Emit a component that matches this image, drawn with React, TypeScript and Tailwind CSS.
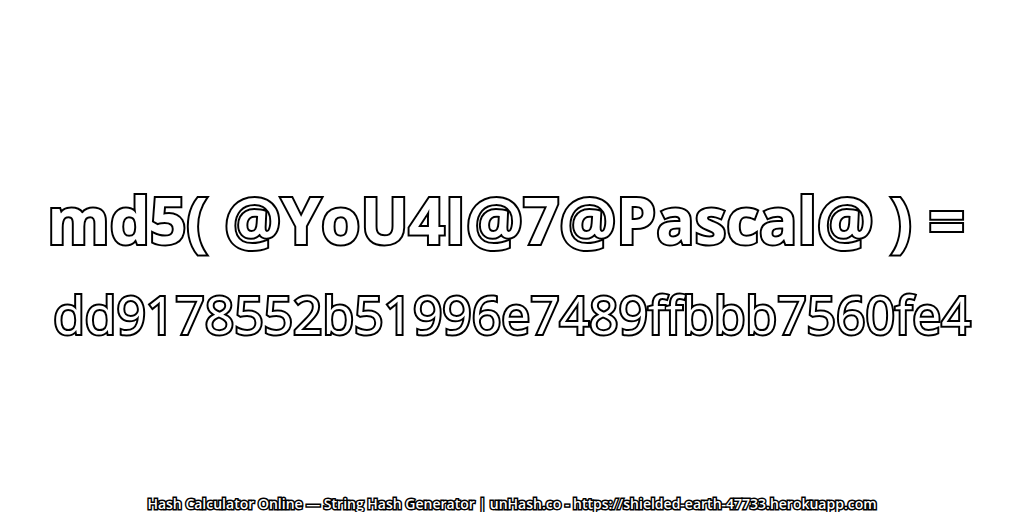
export default function App() {
  return (
    <div className="relative flex h-[512px] w-[1024px] flex-col items-center overflow-hidden bg-white font-['Open_Sans','Noto_Sans',sans-serif] text-white">
      <div className="flex flex-1 flex-col items-center pt-[178px]">
        <h1 className="mr-[12px] text-[63.6px] leading-[84px] font-bold whitespace-nowrap [-webkit-text-stroke:4px_#000] [paint-order:stroke_fill]">
          md5( @YoU4I@7@Pascal@ ) =
        </h1>
        <h2 className="mt-[16px] text-[51.5px] leading-[72px] font-medium whitespace-nowrap [-webkit-text-stroke:4px_#000] [paint-order:stroke_fill]">
          dd9178552b51996e7489ffbbb7560fe4
        </h2>
      </div>
      <p className="absolute bottom-0 text-[14px] leading-[16px] font-semibold whitespace-nowrap [-webkit-text-stroke:3px_#000] [paint-order:stroke_fill]">
        Hash Calculator Online — String Hash Generator | unHash.co - https://shielded-earth-47733.herokuapp.com
      </p>
    </div>
  );
}
